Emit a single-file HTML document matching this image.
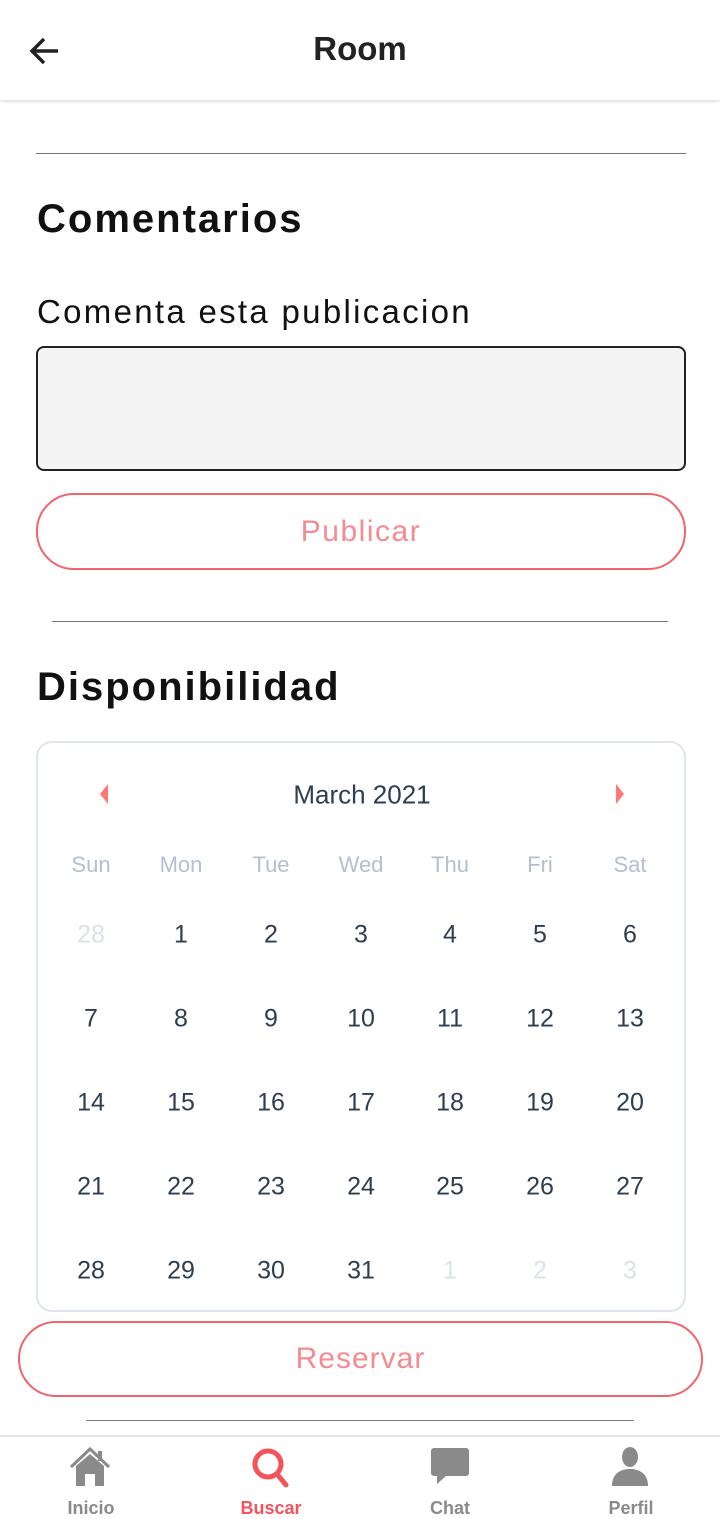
<!DOCTYPE html>
<html><head><meta charset="utf-8"><style>
*{margin:0;padding:0;box-sizing:border-box}
body{width:720px;height:1517px;background:#fff;font-family:"Liberation Sans",sans-serif;position:relative;overflow:hidden;color:#111}
.a{position:absolute}
.hdr{left:0;top:0;width:720px;height:100px;background:#fff;box-shadow:0 2px 3px rgba(0,0,0,.12)}
.line{height:1px;background:#777}
.c{position:absolute;transform:translate(-50%,-50%);font-size:25px;color:#2d3e50;white-space:nowrap}
.w{color:#b4c0cf;font-size:22px}
.g{color:#dbe2ea}
.btn{border:2px solid #f2636b;border-radius:38px;color:#f58a90;font-size:30px;text-align:center}
.nav{position:absolute;top:1498px;transform:translateX(-50%);font-size:18px;font-weight:bold;color:#8a8a8a}
</style></head><body>
<div class="a hdr">
<svg class="a" style="left:28px;top:36px" width="34" height="30" viewBox="0 0 34 30"><path d="M30 15H5M16 3L4 15l12 12" stroke="#222" stroke-width="3.5" fill="none"/></svg>
<div class="a" style="left:0;width:720px;top:30px;text-align:center;font-size:33px;font-weight:bold;color:#222">Room</div>
</div>
<div class="a line" style="left:36px;width:650px;top:153px"></div>
<div class="a" style="left:37px;top:197px;font-size:40px;font-weight:bold;letter-spacing:2px">Comentarios</div>
<div class="a" style="left:37px;top:293px;font-size:33px;letter-spacing:2.3px">Comenta esta publicacion</div>
<div class="a" style="left:36px;top:346px;width:650px;height:125px;background:#f4f4f4;border:2px solid #222;border-radius:8px"></div>
<div class="a btn" style="left:36px;top:493px;width:650px;height:77px;line-height:73px;letter-spacing:1.5px">Publicar</div>
<div class="a line" style="left:52px;width:616px;top:621px"></div>
<div class="a" style="left:37px;top:665px;font-size:40px;font-weight:bold;letter-spacing:2px">Disponibilidad</div>
<div class="a" style="left:36px;top:741px;width:650px;height:571px;border:2px solid #dfe5ec;border-radius:16px"></div>
<svg class="a" style="left:98px;top:784px" width="12" height="20"><path d="M10 0L2 10l8 10z" fill="#f77"/></svg>
<svg class="a" style="left:614px;top:784px" width="12" height="20"><path d="M2 0l8 10-8 10z" fill="#f77"/></svg>
<div class="c" style="left:362px;top:795px;font-size:26px">March 2021</div>
<div id="cal"></div>
<div class="a btn" style="left:18px;top:1321px;width:685px;height:76px;line-height:72px;letter-spacing:1px">Reservar</div>
<div class="a line" style="left:86px;width:548px;top:1420px"></div>
<div class="a" style="left:0;top:1435px;width:720px;height:82px;border-top:2px solid #e4e4e4;background:#fff"></div>
<svg class="a" style="left:68px;top:1446px" width="44" height="42" viewBox="0 0 44 42"><path d="M3 21L22 3l19 18" stroke="#8a8a8a" stroke-width="3" fill="none"/><path d="M8 20L22 8l14 12v20H27V28h-10v12H8z" fill="#8a8a8a"/><rect x="30" y="5" width="4" height="10" fill="#8a8a8a"/></svg>
<svg class="a" style="left:250px;top:1446px" width="42" height="42" viewBox="0 0 42 42"><circle cx="18" cy="18" r="13" stroke="#f2545b" stroke-width="5" fill="none"/><path d="M27 28l9 11" stroke="#f2545b" stroke-width="5" stroke-linecap="round"/></svg>
<svg class="a" style="left:430px;top:1447px" width="40" height="38" viewBox="0 0 40 38"><path d="M4 1h32a3 3 0 013 3v22a3 3 0 01-3 3H16l-9 8v-8H4a3 3 0 01-3-3V4a3 3 0 013-3z" fill="#8a8a8a"/></svg>
<svg class="a" style="left:610px;top:1446px" width="40" height="42" viewBox="0 0 40 42"><ellipse cx="20" cy="11" rx="8" ry="10" fill="#8a8a8a"/><path d="M2 40c0-12 8-17 18-17s18 5 18 17z" fill="#8a8a8a"/></svg>
<div class="nav" style="left:91px">Inicio</div>
<div class="nav" style="left:271px;color:#f2545b">Buscar</div>
<div class="nav" style="left:450px">Chat</div>
<div class="nav" style="left:631px">Perfil</div>
<script>
var xs=[91,181,271,361,450,540,630],h='';
['Sun','Mon','Tue','Wed','Thu','Fri','Sat'].forEach(function(d,i){h+='<div class="c w" style="left:'+xs[i]+'px;top:865px">'+d+'</div>'});
var days=[28];for(var i=1;i<=31;i++)days.push(i);days.push(1,2,3);
days.forEach(function(d,k){var r=Math.floor(k/7),c=k%7,gr=(k==0||k>31)?' g':'';
h+='<div class="c'+gr+'" style="left:'+xs[c]+'px;top:'+(935+r*84)+'px">'+d+'</div>'});
document.getElementById('cal').innerHTML=h;
</script>
</body></html>
